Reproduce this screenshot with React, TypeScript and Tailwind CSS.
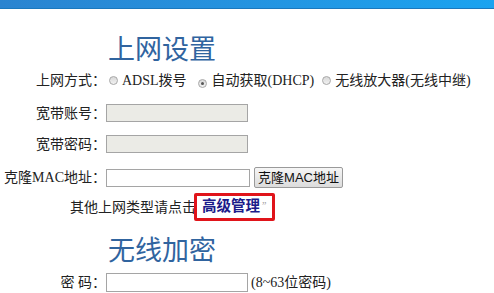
import React from "react";

const FONT = { fontFamily: '"Liberation Serif", "Noto Sans CJK SC", serif' };

function Radio({ checked }: { checked?: boolean }) {
  return (
    <span className="inline-flex items-center justify-center w-[9px] h-[9px] rounded-full border border-[#a8a8a8] bg-gradient-to-b from-[#d8d8d8] to-[#f2f2f2] shrink-0">
      {checked ? <span className="w-[3px] h-[3px] rounded-full bg-[#555]" /> : null}
    </span>
  );
}

function Label({ children }: { children: React.ReactNode }) {
  return <div className="w-[106px] shrink-0 text-right whitespace-nowrap">{children}</div>;
}

export default function App() {
  return (
    <div className="w-[494px] h-[293px] overflow-hidden bg-white text-[14px] text-[#222]" style={FONT}>
      <div className="h-[9px] bg-gradient-to-r from-[#2a84d0] to-[#1aa3f0] border-b border-[#1b78bd]" />
      <div className="mt-[28px] h-[27px] pl-[108px] text-[27px] leading-[27px] text-[#30649f] whitespace-nowrap">上网设置</div>

      <div className="mt-[6px] h-[20px] flex items-center">
        <Label>上网方式：</Label>
        <div className="flex items-center whitespace-nowrap">
          <span className="ml-[3px]"><Radio /></span>
          <span className="ml-[4px]">ADSL拨号</span>
          <span className="ml-[11px]"><Radio checked /></span>
          <span className="ml-[5px]">自动获取(DHCP)</span>
          <span className="ml-[8px]"><Radio /></span>
          <span className="ml-[4px]">无线放大器(无线中继)</span>
        </div>
      </div>

      <div className="mt-[14px] h-[18px] flex items-center">
        <Label>宽带账号：</Label>
        <div className="w-[142px] h-[18px] border border-[#a5a5a5] bg-[#ebebe6]" />
      </div>

      <div className="mt-[13px] h-[18px] flex items-center">
        <Label>宽带密码：</Label>
        <div className="w-[142px] h-[18px] border border-[#a5a5a5] bg-[#ebebe6]" />
      </div>

      <div className="mt-[14px] h-[21px] flex items-center">
        <Label>克隆MAC地址：</Label>
        <div className="w-[144px] h-[18px] border border-[#a5a5a5] bg-white" />
        <div
          className="ml-[4px] w-[89px] h-[21px] flex items-center justify-center border border-[#9a9a9a] rounded-[2px] bg-gradient-to-b from-[#f6f6f6] to-[#dcdcdc] text-[13px] text-[#111]"
          style={{ fontFamily: '"Liberation Sans", "Noto Sans CJK SC", sans-serif' }}
        >
          克隆MAC地址
        </div>
      </div>

      <div className="mt-[5px] h-[28px] flex items-center pl-[70px] whitespace-nowrap">
        <span>其他上网类型请点击</span>
        <span className="-ml-[2px] h-[28px] w-[81px] border-[3px] border-[#e0141a] rounded-[2px] flex items-center pl-[5px]">
          <span className="font-bold text-[14.5px] text-[#1b1b8a]">高级管理</span>
          <span className="ml-[2px] text-[10px] text-[#999] self-start mt-[2px]">”</span>
        </span>
      </div>

      <div className="mt-[17px] h-[27px] pl-[108px] text-[27px] leading-[27px] text-[#30649f] whitespace-nowrap">无线加密</div>

      <div className="mt-[8px] h-[19px] flex items-center">
        <Label>密&nbsp;码：</Label>
        <div className="w-[142px] h-[19px] border border-[#a5a5a5] bg-white" />
        <span className="ml-[3px] whitespace-nowrap">(8~63位密码)</span>
      </div>
    </div>
  );
}
